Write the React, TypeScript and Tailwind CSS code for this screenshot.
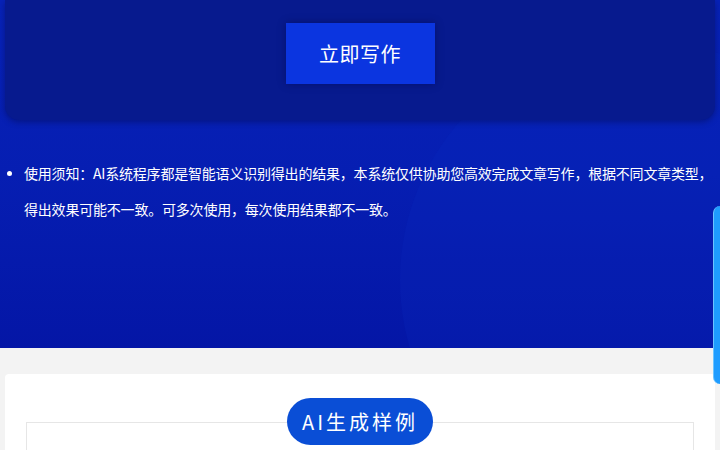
import React from "react";

export default function App() {
  return (
    <div
      className="relative w-full h-[450px] overflow-hidden bg-[#f3f3f3]"
      style={{ fontFamily: '"Noto Sans CJK SC", "Noto Sans", sans-serif' }}
    >
      {/* Blue hero section */}
      <div className="relative h-[348px] bg-gradient-to-b from-[#0722b8] via-[#061eb2] to-[#0416a6] overflow-hidden">
        <div className="absolute right-[-160px] top-[40px] w-[480px] h-[480px] rounded-full bg-[#0a2cc4] opacity-20" />
        <div className="relative mx-[5px] h-[120px] rounded-b-[14px] bg-[#071a8e] shadow-[0_2px_6px_rgba(0,0,40,0.35)] flex justify-center pt-[23px]">
          <button className="w-[149px] h-[61px] bg-[#0b35e0] text-white text-[20px] tracking-[0.5px] shadow-[0_0_8px_rgba(0,0,60,0.4)]">
            立即写作
          </button>
        </div>
        <div className="relative flex pl-[6px] pr-[6px] pt-[35px] text-white text-[14px] leading-[36px]">
          <span className="w-[18px] shrink-0 flex justify-start pl-[1px] pt-[16px]">
            <span className="block w-[5px] h-[5px] rounded-full bg-white" />
          </span>
          <p className="tracking-[-0.2px]">
            使用须知：AI系统程序都是智能语义识别得出的结果，本系统仅供协助您高效完成文章写作，根据不同文章类型，得出效果可能不一致。可多次使用，每次使用结果都不一致。
          </p>
        </div>
      </div>

      {/* Sample card */}
      <div className="pt-[26px] px-[5px]">
        <div className="relative bg-white rounded-t-[4px] pt-[48px] px-[21px] h-[200px]">
          <div className="h-[150px] border border-[#e6e6e6]" />
          <div className="absolute left-1/2 -translate-x-1/2 top-[24px] w-[146px] h-[47px] rounded-full bg-[#0a4ed6] flex items-center justify-center text-white text-[20px] tracking-[3px]">
            AI生成样例
          </div>
        </div>
      </div>

      {/* Right floating tab */}
      <div className="absolute right-0 top-[206px] w-[7px] h-[178px] rounded-l-[10px] bg-[#1e9cff] border-l border-[#6cc3ff]" />
    </div>
  );
}
